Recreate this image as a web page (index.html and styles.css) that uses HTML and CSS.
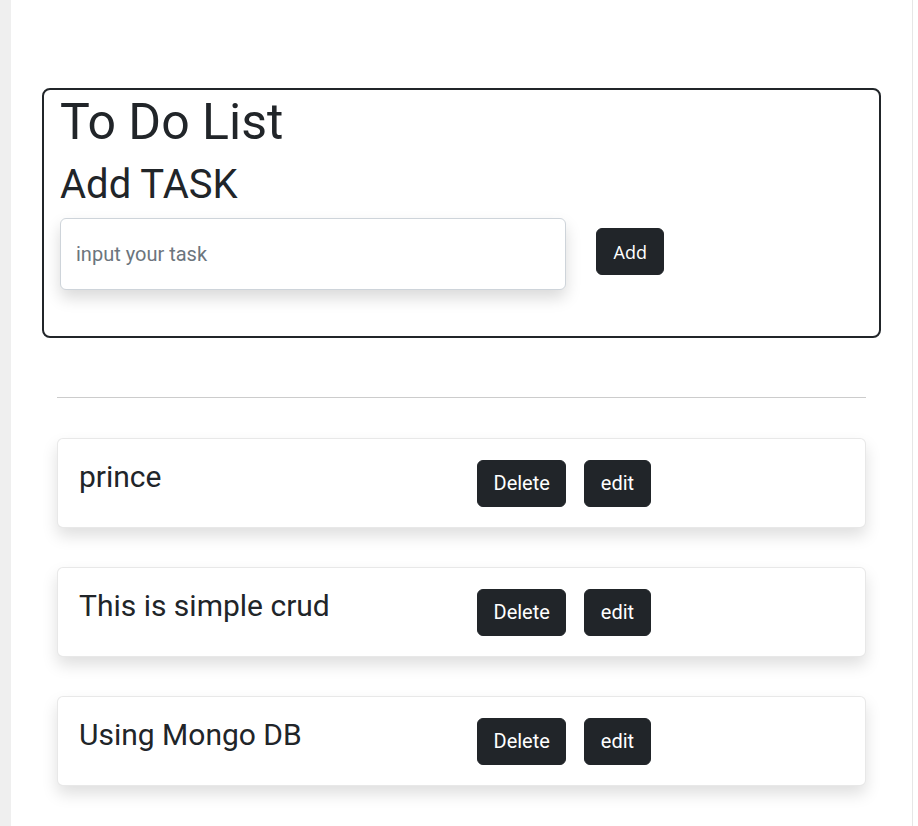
FILE: index.html
```html
<!DOCTYPE html>
<html lang="en">
<head>
<meta charset="utf-8">
<title>To Do List</title>
<link rel="stylesheet" href="styles.css">
</head>
<body>
<div class="page">
  <div class="strip"></div>
  <main class="main">
    <section class="add-box">
      <h1 class="title">To Do List</h1>
      <h2 class="subtitle">Add TASK</h2>
      <div class="add-row">
        <input class="task-input" type="text" placeholder="input your task">
        <button class="btn btn-add">Add</button>
      </div>
    </section>
    <section class="list">
      <hr class="divider">
      <div class="card">
        <div class="card-text">prince</div>
        <div class="card-actions">
          <button class="btn">Delete</button>
          <button class="btn">edit</button>
        </div>
      </div>
      <div class="card">
        <div class="card-text">This is simple crud</div>
        <div class="card-actions">
          <button class="btn">Delete</button>
          <button class="btn">edit</button>
        </div>
      </div>
      <div class="card">
        <div class="card-text">Using Mongo DB</div>
        <div class="card-actions">
          <button class="btn">Delete</button>
          <button class="btn">edit</button>
        </div>
      </div>
    </section>
  </main>
  <div class="right-gap"></div>
</div>
</body>
</html>
```
FILE: styles.css
```css
* { box-sizing: border-box; }
html, body { margin: 0; padding: 0; background: #fff; }
body {
  font-family: Roboto, "Liberation Sans", sans-serif;
  color: #212529;
}
.page {
  display: flex;
  min-height: 826px;
}
.strip {
  width: 11px;
  flex: 0 0 11px;
  background: #efefef;
}
.main {
  flex: 1;
  border-right: 1px solid #e6e6e6;
  padding: 88px 31px 0 31px;
}
.right-gap {
  width: 5px;
  flex: 0 0 5px;
}
.add-box {
  border: 2px solid #212529;
  border-radius: 8px;
  padding: 2px 16px 46px 16px;
}
.title {
  margin: 0;
  font-size: 50px;
  font-weight: 400;
  line-height: 1.2;
}
.subtitle {
  margin: 9px 0 0 0;
  font-size: 40px;
  font-weight: 400;
  line-height: 1.2;
}
.add-row {
  display: flex;
  align-items: flex-start;
  gap: 30px;
  margin-top: 9px;
}
.task-input {
  width: 506px;
  height: 72px;
  border: 1px solid #ced4da;
  border-radius: 6px;
  padding: 0 15px;
  font-family: Roboto, "Liberation Sans", sans-serif;
  font-size: 20px;
  color: #212529;
  background: #fff;
  box-shadow: 0 8px 16px rgba(0, 0, 0, 0.15);
  outline: none;
}
.task-input::placeholder { color: #6c757d; }
.btn {
  background: #212529;
  color: #fff;
  border: 1px solid #212529;
  border-radius: 6px;
  font-family: Roboto, "Liberation Sans", sans-serif;
  font-size: 20px;
  line-height: 29px;
  padding: 8px 15.5px;
  cursor: pointer;
}
.btn-add {
  margin-top: 10px;
  font-family: "Open Sans", "Liberation Sans", sans-serif;
  font-size: 18px;
  line-height: 28px;
  padding: 8.5px 16.5px;
}
.list {
  padding: 0 15px;
}
.divider {
  margin: 59px 0 40px 0;
  border: 0;
  border-top: 1px solid #cccccc;
  height: 0;
}
.card {
  display: grid;
  grid-template-columns: 398px auto;
  align-items: start;
  height: 90px;
  margin-bottom: 39px;
  padding: 20px 21px 0 21px;
  border: 1px solid rgba(0, 0, 0, 0.09);
  border-radius: 6px;
  background: #fff;
  box-shadow: 0 8px 16px rgba(0, 0, 0, 0.13);
}
.card-text {
  font-size: 30px;
  line-height: 36px;
  font-weight: 400;
}
.card-actions {
  display: flex;
  gap: 18px;
  margin-top: 1px;
}
```
